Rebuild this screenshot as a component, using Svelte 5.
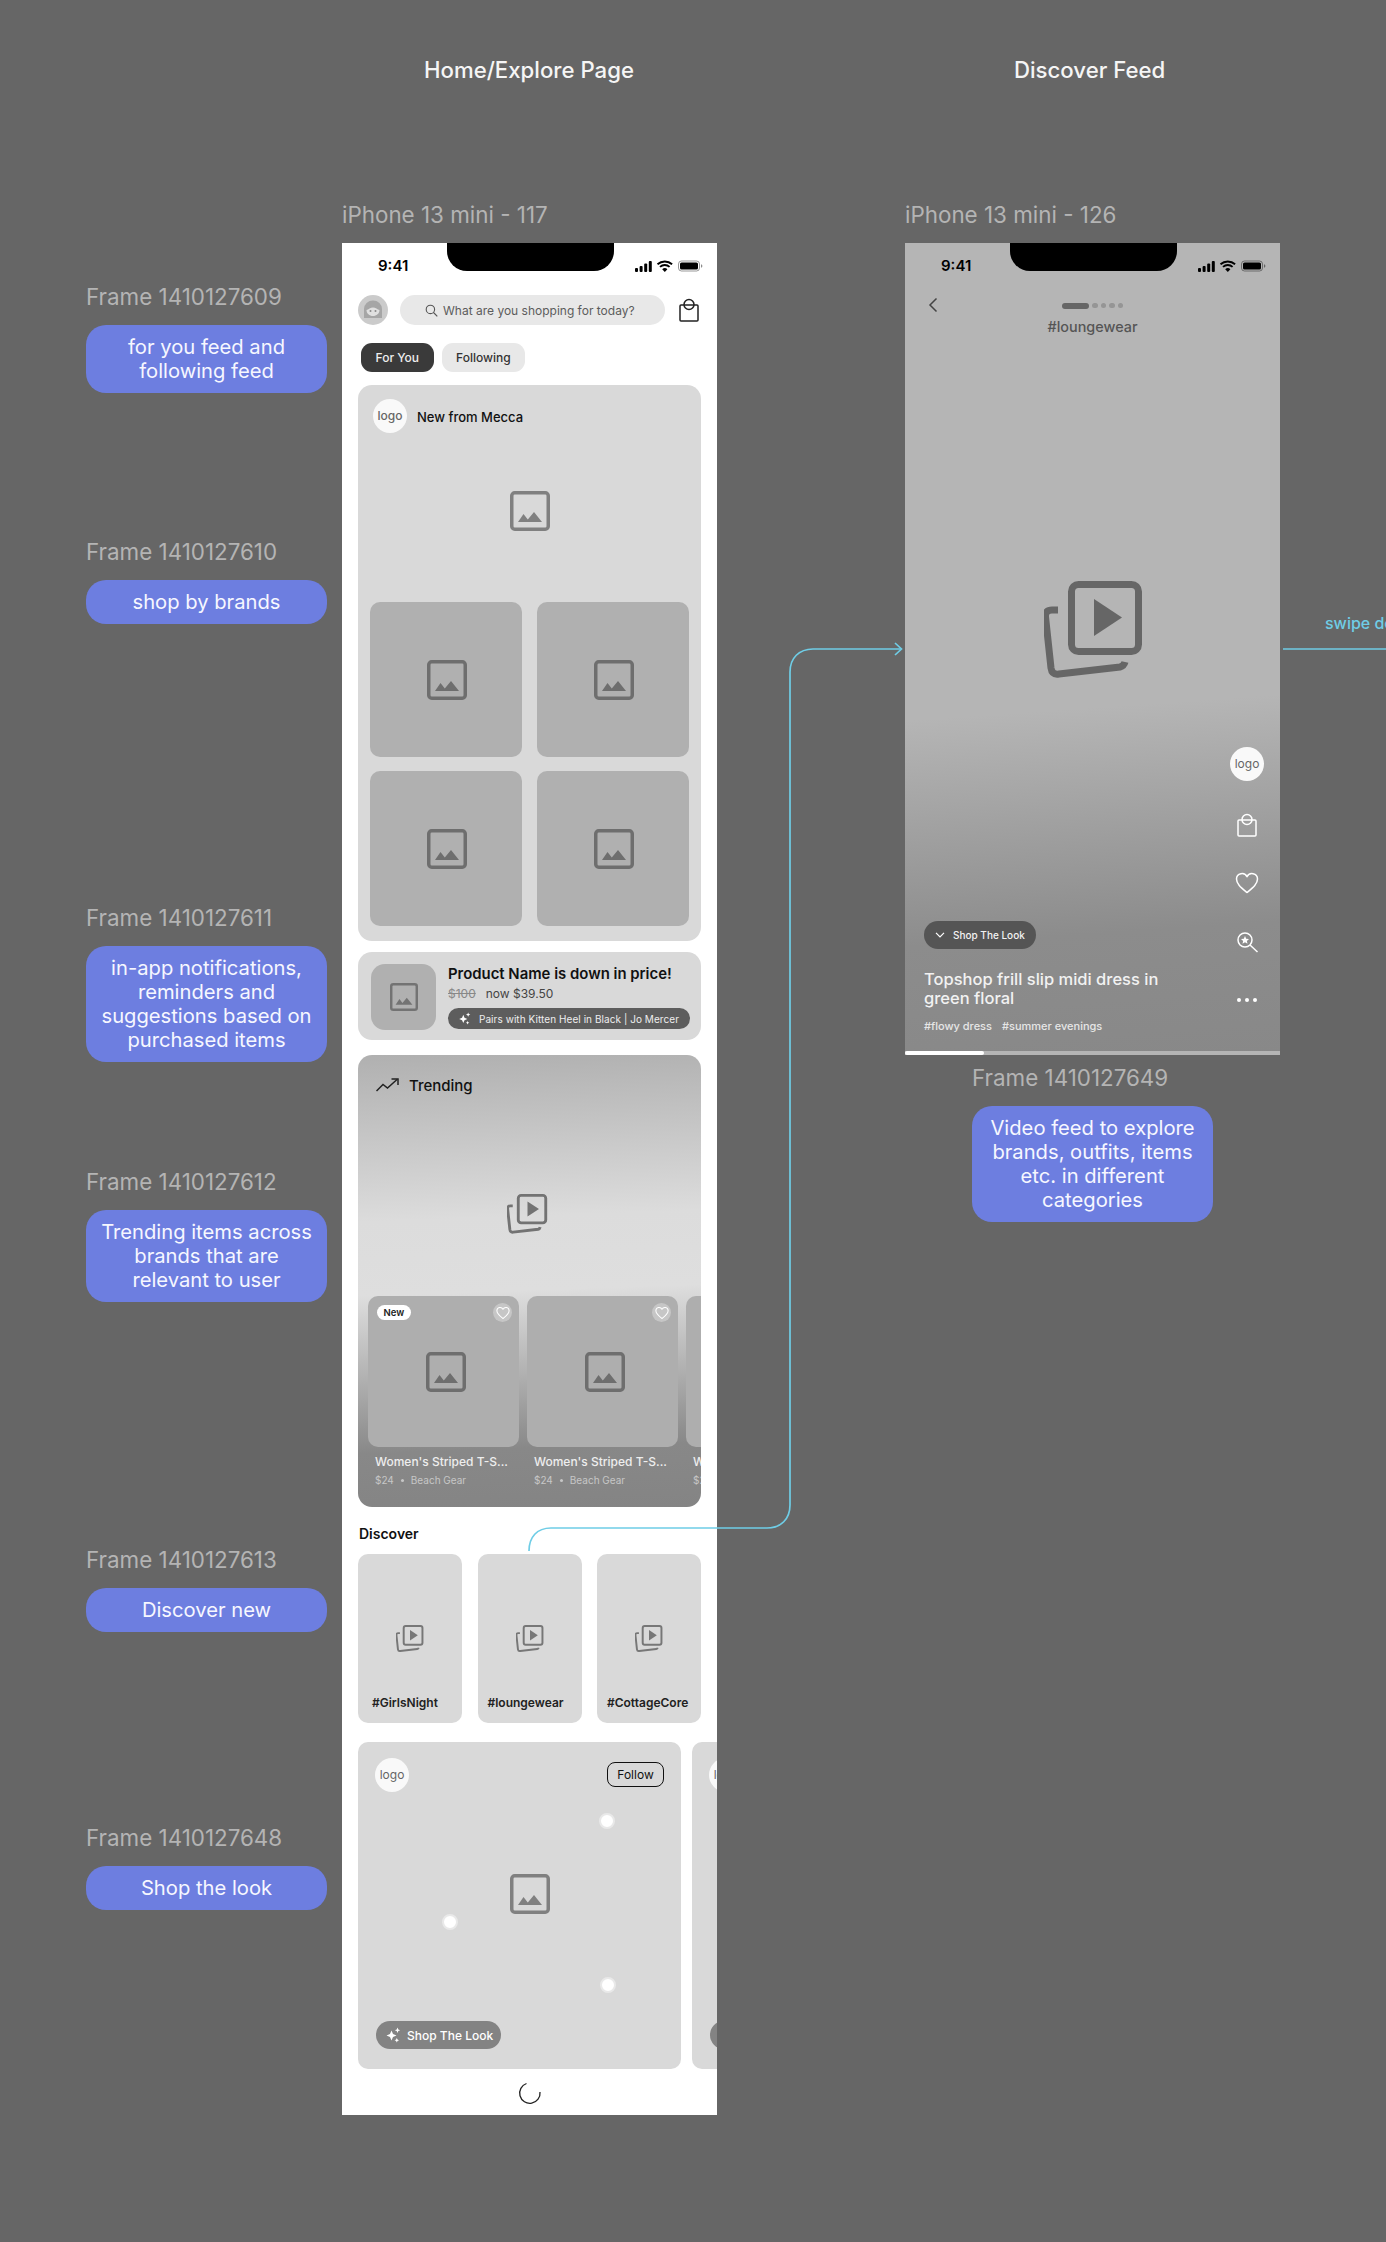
<script>
	const notes = [
		{ label: 'Frame 1410127609', text: 'for you feed and following feed', top: 283 },
		{ label: 'Frame 1410127610', text: 'shop by brands', top: 538 },
		{ label: 'Frame 1410127611', text: 'in-app notifications, reminders and suggestions based on purchased items', top: 904 },
		{ label: 'Frame 1410127612', text: 'Trending items across brands that are relevant to user', top: 1168 },
		{ label: 'Frame 1410127613', text: 'Discover new', top: 1546 },
		{ label: 'Frame 1410127648', text: 'Shop the look', top: 1824 }
	];
	const products = [{ badge: true }, { badge: false }, { badge: false }];
	const tags = ['#GirlsNight', '#loungewear', '#CottageCore'];
	const pins = [
		{ x: 249, y: 79 },
		{ x: 92, y: 180 },
		{ x: 250, y: 243 }
	];
</script>

{#snippet statusBar()}
	<div class="status">
		<span class="clock">9:41</span>
		<div class="notch"></div>
		<svg class="status-icons" width="68" height="12" viewBox="0 0 68 12">
			<rect x="0" y="8" width="3" height="4" rx="1" fill="#000" />
			<rect x="4.6" y="6" width="3" height="6" rx="1" fill="#000" />
			<rect x="9.2" y="3.5" width="3" height="8.5" rx="1" fill="#000" />
			<rect x="13.8" y="1" width="3" height="11" rx="1" fill="#000" />
			<path d="M22.5 4.2a11 11 0 0 1 14.6 0M25 6.9a7.2 7.2 0 0 1 9.6 0" fill="none" stroke="#000" stroke-width="1.9" />
			<path d="M27.2 9.2a3.9 3.9 0 0 1 5.2 0l-2.6 2.7z" fill="#000" />
			<rect x="43.5" y="1" width="21" height="10" rx="3" fill="none" stroke="#000" stroke-opacity=".4" />
			<rect x="45" y="2.5" width="18" height="7" rx="1.6" fill="#000" />
			<path d="M66 4.2v3.6c.8-.3 1.4-1 1.4-1.8S66.800 4.500 66 4.200z" fill="#000" fill-opacity=".45" />
		</svg>
	</div>
{/snippet}

{#snippet imageIcon(size, color)}
	<svg class="block" width={size} height={size} viewBox="0 0 40 40">
		<rect x="1.750" y="1.750" width="36.500" height="36.500" rx="3" fill="none" stroke={color} stroke-width="3.500" />
		<path d="M8 31L13.500 23 17.800 28.500 24 21 32 31z" fill={color} />
	</svg>
{/snippet}

{#snippet playIcon(size, color)}
	<svg class="block" width={size} height={size} viewBox="0 0 100 100">
		<rect x="27.500" y="3.500" width="67" height="67" rx="7" fill="none" stroke={color} stroke-width="7" />
		<path d="M50 18l28 18.500L50 55z" fill={color} />
		<path d="M14 29H8Q1 29 1.500 36L7 87Q8 94 15 93L76 86Q80 85 81 81" fill="none" stroke={color} stroke-width="7" />
	</svg>
{/snippet}

{#snippet bagIcon(color)}
	<svg class="block" width="20" height="24" viewBox="0 0 20 24">
		<rect x="1" y="7" width="18" height="16" rx="1" fill="none" stroke={color} stroke-width="1.500" />
		<circle cx="10" cy="6.500" r="5" fill="none" stroke={color} stroke-width="1.500" />
	</svg>
{/snippet}

{#snippet heartIcon(size, color, width)}
	<svg class="block" width={size} height={size} viewBox="0 0 24 24">
		<path d="M12 21.500C6 16.500 1.500 13 1.500 8A5.500 5.500 0 0 1 12 5.800 5.500 5.500 0 0 1 22.500 8c0 5-4.500 8.500-10.500 13.500z" fill="none" stroke={color} stroke-width={width} stroke-linejoin="round" />
	</svg>
{/snippet}

{#snippet sparkle(size)}
	<svg class="block" width={size} height={size} viewBox="0 0 16 16" fill="#fff">
		<path d="M6.500 3.500l1.500 3.500 3.500 1.500-3.500 1.500-1.500 3.500-1.500-3.500L1.500 8.500 5 7z" />
		<path d="M12.500 0.500l.8 1.900 1.900.8-1.900.8-.8 1.900-.8-1.900-1.900-.8 1.900-.8z" />
		<path d="M11.800 11l.7 1.500 1.500.7-1.500.7-.7 1.600-.7-1.600-1.500-.7 1.500-.7z" />
	</svg>
{/snippet}

<div class="board">
	<div class="title" style="left: 424px">Home/Explore Page</div>
	<div class="title" style="left: 1014px">Discover Feed</div>

	<div class="frame-name" style="left: 342px; top: 201px">iPhone 13 mini - 117</div>
	<div class="frame-name" style="left: 905px; top: 201px">iPhone 13 mini - 126</div>

	{#each notes as note}
		<div class="note" style="left: 86px; top: {note.top}px">
			<div class="frame-name">{note.label}</div>
			<div class="bubble">{note.text}</div>
		</div>
	{/each}
	<div class="note" style="left: 972px; top: 1064px">
		<div class="frame-name">Frame 1410127649</div>
		<div class="bubble">Video feed to explore brands, outfits, items etc. in different categories</div>
	</div>

	<section class="phone home">
		{@render statusBar()}

		<div class="topbar">
			<div class="avatar">
				<svg width="30" height="30" viewBox="0 0 30 30">
					<path d="M6 23v-9a9 8.500 0 0 1 18 0v9z" fill="#a6a6a6" />
					<path d="M8.500 15c2-.5 4-2.500 6.500-2.500s4.500 2 6.500 2.500c0 3.500-3 6-6.500 6s-6.500-2.500-6.500-6z" fill="#e0e0e0" />
					<circle cx="12.500" cy="16" r="1" fill="#8a8a8a" />
					<circle cx="17.500" cy="16" r="1" fill="#8a8a8a" />
				</svg>
			</div>
			<div class="search">
				<svg width="13" height="13" viewBox="0 0 13 13" fill="none" stroke="#555" stroke-width="1.100">
					<circle cx="5.400" cy="5.400" r="4.200" />
					<path d="M8.500 8.500l3.800 3.800" />
				</svg>
				<span>What are you shopping for today?</span>
			</div>
			{@render bagIcon('#222')}
		</div>

		<div class="tabs">
			<button class="tab active">For You</button>
			<button class="tab">Following</button>
		</div>

		<div class="card brand">
			<div class="brand-head">
				<div class="logo">logo</div>
				<span>New from Mecca</span>
			</div>
			<div class="brand-hero">{@render imageIcon(40, '#808080')}</div>
			<div class="brand-grid">
				{#each [1, 2, 3, 4] as n (n)}
					<div class="brand-tile">{@render imageIcon(40, '#6e6e6e')}</div>
				{/each}
			</div>
		</div>

		<div class="card price">
			<div class="price-thumb">{@render imageIcon(28, '#737373')}</div>
			<div class="price-body">
				<div class="price-name">Product Name is down in price!</div>
				<div class="price-line"><s>$100</s><span>now $39.50</span></div>
				<div class="pairs">
					{@render sparkle(13)}
					<span>Pairs with Kitten Heel in Black | Jo Mercer</span>
				</div>
			</div>
		</div>

		<div class="card trending">
			<div class="trending-head">
				<svg width="23" height="14" viewBox="0 0 23 14" fill="none" stroke="#222" stroke-width="1.500">
					<path d="M0.500 13l6.500-6.500 4.500 3.500 9.500-8.500" />
					<path d="M15.500 1h6.500v6" />
				</svg>
				<span>Trending</span>
			</div>
			<div class="trending-hero">{@render playIcon(41, '#737373')}</div>
			<div class="products">
				{#each products as product}
					<div class="product">
						<div class="product-img">
							{#if product.badge}<span class="badge">New</span>{/if}
							<span class="like">{@render heartIcon(14, '#fff', 1.800)}</span>
							{@render imageIcon(40, '#6e6e6e')}
						</div>
						<div class="product-name">Women's Striped T-S...</div>
						<div class="product-sub"><span>$24</span><i></i><span>Beach Gear</span></div>
					</div>
				{/each}
			</div>
		</div>

		<h3 class="discover-title">Discover</h3>
		<div class="discover">
			{#each tags as tag}
				<div class="discover-tile">
					{@render playIcon(28, '#777')}
					<span>{tag}</span>
				</div>
			{/each}
		</div>

		<div class="looks">
			{#each [0, 1] as n (n)}
				<div class="look">
					<div class="logo">logo</div>
					<button class="follow">Follow</button>
					<div class="look-icon">{@render imageIcon(40, '#808080')}</div>
					{#each pins as pin}
						<span class="pin" style="left: {pin.x}px; top: {pin.y}px"></span>
					{/each}
					<div class="look-pill">
						{@render sparkle(16)}
						<span>Shop The Look</span>
					</div>
				</div>
			{/each}
		</div>

		<div class="spinner">
			<svg width="24" height="24" viewBox="0 0 24 24" fill="none" stroke="#222" stroke-width="1.300">
				<path d="M8.500 2.500A10.200 10.200 0 1 0 22 11" />
			</svg>
		</div>
	</section>

	<section class="phone feed">
		{@render statusBar()}

		<svg class="back" width="10" height="16" viewBox="0 0 10 16" fill="none" stroke="#444" stroke-width="1.500">
			<path d="M8.500 1.500L2 8l6.500 6.500" />
		</svg>
		<div class="story">
			<div class="story-dots">
				<b></b>
				{#each [1, 2, 3, 4] as n (n)}<i></i>{/each}
			</div>
			<span>#loungewear</span>
		</div>

		<div class="feed-hero">{@render playIcon(100, '#666')}</div>

		<div class="rail">
			<div class="logo">logo</div>
			{@render bagIcon('#fff')}
			{@render heartIcon(24, '#fff', 1.500)}
			<svg class="block" width="24" height="24" viewBox="0 0 24 24" fill="none" stroke="#fff" stroke-width="1.500">
				<circle cx="10" cy="10" r="7" />
				<path d="M15 15l7.500 7" />
				<path d="M10 6l1.200 2.700 2.800.3-2.100 1.900.6 2.800-2.500-1.400-2.500 1.400.6-2.800L6 9l2.800-.3z" fill="#fff" stroke="none" />
			</svg>
			<svg class="block" width="24" height="24" viewBox="0 0 24 24" fill="#fff">
				<circle cx="4" cy="12" r="2" />
				<circle cx="12" cy="12" r="2" />
				<circle cx="20" cy="12" r="2" />
			</svg>
		</div>

		<div class="caption">
			<div class="caption-pill">
				<svg width="10" height="6" viewBox="0 0 10 6" fill="none" stroke="#fff" stroke-width="1.200">
					<path d="M1 .8l4 4 4-4" />
				</svg>
				<span>Shop The Look</span>
			</div>
			<div class="caption-title">Topshop frill slip midi dress in green floral</div>
			<div class="caption-tags"><span>#flowy dress</span><span>#summer evenings</span></div>
		</div>
		<div class="progress"><div class="progress-fill" style="width: {21}%"></div></div>
	</section>

	<svg class="links" width="1386" height="2242" viewBox="0 0 1386 2242" fill="none" stroke="#6fcde6" stroke-width="1.700">
		<path d="M529 1551C529 1537 537 1528 551 1528H767C781 1528 790 1519 790 1505V672C790 658 799 649 813 649H901" />
		<path d="M895 643l6.500 6-6.500 6" />
		<path d="M1283 649H1386" />
	</svg>
	<div class="swipe">swipe down</div>
</div>

<style>
	:global(body) { margin: 0; background: #666; }

	.board {
		position: relative;
		width: 1386px;
		height: 2242px;
		overflow: hidden;
		background: #666;
		font-family: 'Inter', 'Liberation Sans', sans-serif;
		font-optical-sizing: none;
	}

	.block { display: block; flex-shrink: 0; }

	.title {
		position: absolute;
		top: 56px;
		font-size: 22.200px;
		line-height: 28px;
		font-weight: 500;
		color: #f5f5f5;
	}

	.frame-name {
		font-size: 22.400px;
		line-height: 28px;
		color: #b4b4b4;
		white-space: nowrap;
	}
	.board > .frame-name { position: absolute; }

	.note {
		position: absolute;
		width: 241px;
		display: flex;
		flex-direction: column;
		gap: 14px;
	}

	.bubble {
		background: #6d7ee0;
		color: #f6f7ff;
		border-radius: 20px;
		padding: 10px 12px;
		font-size: 20.200px;
		line-height: 24px;
		text-align: center;
	}

	.phone {
		position: absolute;
		top: 243px;
		width: 375px;
		overflow: hidden;
	}

	.status { position: relative; height: 52px; }
	.clock {
		position: absolute;
		left: 36px;
		top: 13px;
		font-size: 15px;
		line-height: 20px;
		font-weight: 600;
		color: #000;
	}
	.notch {
		position: absolute;
		left: 105px;
		top: 0;
		width: 167px;
		height: 28px;
		background: #000;
		border-radius: 0 0 20px 20px;
	}
	.status-icons { position: absolute; left: 293px; top: 17px; }

	.home { left: 342px; height: 1872px; background: #fff; }

	.topbar { display: flex; align-items: center; height: 30px; padding: 0 18px 0 16px; }
	.avatar { width: 30px; height: 30px; border-radius: 50%; background: #cbcbcb; overflow: hidden; flex-shrink: 0; }
	.search {
		flex: 1;
		height: 30px;
		margin: 0 14px 0 12px;
		border-radius: 15px;
		background: #e8e8e8;
		display: flex;
		align-items: center;
		padding-left: 25px;
		gap: 5px;
		font-size: 12px;
		color: #5c5c5c;
		white-space: nowrap;
	}

	.tabs { display: flex; gap: 8px; padding: 18px 0 13px 19px; }
	.tab {
		border: 0;
		height: 29px;
		padding: 0 14.500px;
		border-radius: 11px;
		background: #e8e8e8;
		color: #333;
		font: 500 12px 'Inter', sans-serif;
		font-optical-sizing: none;
	}
	.tab.active { background: #3a3a3a; color: #eee; }

	.card { margin-left: 16px; width: 343px; background: #d9d9d9; border-radius: 14px; box-sizing: border-box; }

	.logo {
		width: 34px;
		height: 34px;
		border-radius: 50%;
		background: #f9f9f9;
		color: #666;
		font-size: 12px;
		line-height: 34px;
		text-align: center;
		flex-shrink: 0;
	}

	.brand { height: 556px; padding-top: 14px; }
	.brand-head { display: flex; align-items: center; gap: 10px; height: 34px; padding-left: 15px; font-size: 13px; font-weight: 500; color: #111; }
	.brand-head span { margin-top: 2px; }
	.brand-hero { height: 155px; margin-bottom: 14px; display: flex; align-items: center; justify-content: center; }
	.brand-grid { display: grid; grid-template-columns: 152px 152px; gap: 14px 15px; padding-left: 12px; }
	.brand-tile { height: 155px; background: #b0b0b0; border-radius: 10px; display: flex; align-items: center; justify-content: center; padding-left: 1px; }

	.price { height: 88px; margin-top: 11px; display: flex; padding: 12px 11px 0 13px; gap: 12px; }
	.price-thumb { width: 65px; height: 66px; border-radius: 14px; background: #b0b0b0; display: flex; align-items: center; justify-content: center; flex-shrink: 0; }
	.price-body { flex: 1; min-width: 0; }
	.price-name { font-size: 14.900px; line-height: 20px; font-weight: 600; color: #111; white-space: nowrap; }
	.price-line { display: flex; gap: 10px; font-size: 12px; line-height: 17px; color: #444; margin-top: 1px; }
	.price-line s { color: #888; }
	.pairs {
		height: 21px;
		margin-top: 6px;
		background: #5d5d5d;
		border-radius: 11px;
		display: flex;
		align-items: center;
		gap: 8px;
		padding-left: 10px;
		font-size: 10px;
		letter-spacing: 0.06px;
		color: #eee;
		white-space: nowrap;
	}

	.trending {
		height: 452px;
		margin-top: 15px;
		padding-top: 19px;
		overflow: hidden;
		background: linear-gradient(178deg, #b0b0b0 0%, #dcdcdc 36%, #dedede 52%, #888 86%, #848484 100%);
	}
	.trending-head { display: flex; align-items: center; gap: 10px; height: 22px; padding-left: 18px; font-size: 15px; font-weight: 500; color: #111; }
	.trending-hero { height: 170px; padding: 33px 5px 0 0; box-sizing: content-box; margin-bottom: -3px; display: flex; align-items: center; justify-content: center; }
	.products { display: flex; gap: 8px; padding-left: 10px; }
	.product { width: 151px; flex-shrink: 0; }
	.product-img {
		position: relative;
		height: 151px;
		box-sizing: border-box;
		padding-left: 5px;
		border-radius: 10px;
		background: #aeaeae;
		display: flex;
		align-items: center;
		justify-content: center;
	}
	.badge {
		position: absolute;
		left: 9px;
		top: 9px;
		height: 15px;
		padding: 0 6.500px;
		border-radius: 8px;
		background: #fff;
		color: #222;
		font-size: 9.500px;
		line-height: 15px;
		font-weight: 600;
	}
	.like {
		position: absolute;
		right: 7px;
		top: 7px;
		width: 19px;
		height: 19px;
		border-radius: 50%;
		background: rgba(255, 255, 255, 0.3);
		display: flex;
		align-items: center;
		justify-content: center;
	}
	.product-name { margin: 8px 0 0 7px; font-size: 12px; line-height: 14px; font-weight: 500; color: #eee; white-space: nowrap; }
	.product-sub { display: flex; align-items: center; gap: 6px; margin: 5px 0 0 7px; font-size: 10px; line-height: 12px; color: #c6c6c6; white-space: nowrap; }
	.product-sub i { width: 3px; height: 3px; border-radius: 50%; background: #c6c6c6; margin: 0 1px; }

	.discover-title { margin: 17px 0 12px 17px; font-size: 14px; line-height: 19px; height: 18px; font-weight: 600; color: #111; }
	.discover { display: flex; justify-content: space-between; width: 343px; margin-left: 16px; }
	.discover-tile {
		width: 104px;
		height: 169px;
		border-radius: 10px;
		background: #d9d9d9;
		box-sizing: border-box;
		padding: 71px 0 12px 10px;
		display: flex;
		flex-direction: column;
		font-size: 12px;
		line-height: 16px;
		font-weight: 600;
		color: #222;
	}
	.discover-tile:first-child { padding-left: 14px; }
	.discover-tile :global(svg) { align-self: center; margin-left: -10px; }
	.discover-tile:first-child :global(svg) { margin-left: -14px; }
	.discover-tile span { margin-top: auto; white-space: nowrap; }

	.looks { display: flex; gap: 11px; margin: 19px 0 0 16px; }
	.look {
		position: relative;
		width: 323px;
		height: 327px;
		flex-shrink: 0;
		border-radius: 10px;
		background: #d9d9d9;
		box-sizing: border-box;
		padding: 16px 0 0 17px;
	}
	.follow {
		position: absolute;
		right: 17px;
		top: 20px;
		width: 57px;
		height: 25px;
		box-sizing: border-box;
		padding: 0;
		border: 1px solid #111;
		border-radius: 8px;
		background: transparent;
		color: #111;
		font: 400 12px 'Inter', sans-serif;
		font-optical-sizing: none;
	}
	.look-icon { position: absolute; left: 152px; top: 132px; }
	.pin {
		position: absolute;
		width: 12px;
		height: 12px;
		margin: -8px 0 0 -8px;
		border-radius: 50%;
		background: #fff;
		border: 2px solid #e9e9e9;
	}
	.look-pill {
		position: absolute;
		left: 18px;
		top: 279px;
		height: 28px;
		width: 125px;
		box-sizing: border-box;
		padding-left: 9px;
		border-radius: 14px;
		background: #838383;
		display: flex;
		align-items: center;
		gap: 6px;
		color: #fff;
		font-size: 12px;
		font-weight: 500;
		white-space: nowrap;
	}

	.spinner { display: flex; justify-content: center; padding-top: 12px; }

	.feed {
		left: 905px;
		height: 812px;
		display: flex;
		flex-direction: column;
		background: linear-gradient(176deg, #b5b5b5 0%, #b5b5b5 57%, #8c8c8c 84%, #888 100%);
	}
	.back { position: absolute; left: 23px; top: 54px; }
	.story { display: flex; flex-direction: column; align-items: center; gap: 3px; font-size: 14.400px; line-height: 16px; font-weight: 500; color: #555; }
	.story-dots { display: flex; align-items: center; gap: 3px; height: 21px; }
	.story-dots b { width: 27px; height: 6px; border-radius: 3px; background: #666; }
	.story-dots i { width: 5.500px; height: 5.500px; border-radius: 50%; background: #959595; }
	.feed-hero { display: flex; justify-content: center; margin-top: 246px; padding-left: 2px; }
	.rail {
		position: absolute;
		right: 16px;
		top: 504px;
		width: 34px;
		display: flex;
		flex-direction: column;
		align-items: center;
		gap: 34.500px;
	}
	.rail :global(svg:nth-child(2)) { margin-top: -3px; }
	.caption { margin-top: auto; padding: 0 19px; color: #f2f2f2; }
	.caption-pill {
		width: 112px;
		height: 28px;
		box-sizing: border-box;
		border-radius: 14px;
		background: #555;
		display: flex;
		align-items: center;
		gap: 8px;
		padding-left: 11px;
		font-size: 10px;
		font-weight: 500;
		white-space: nowrap;
	}
	.caption-title { width: 260px; margin-top: 21px; font-size: 16.500px; line-height: 19px; font-weight: 500; }
	.caption-tags { display: flex; gap: 10px; margin: 11px 0 18px; font-size: 11px; line-height: 14px; font-weight: 500; color: #e6e6e6; }
	.progress { height: 4px; background: #b5b5b5; }
	.progress-fill { height: 100%; background: #fff; border-radius: 2px; }

	.links { position: absolute; left: 0; top: 0; pointer-events: none; }
	.swipe { position: absolute; left: 1325px; top: 613px; font-size: 16px; line-height: 20px; font-weight: 500; color: #6fcde6; white-space: nowrap; }
</style>
